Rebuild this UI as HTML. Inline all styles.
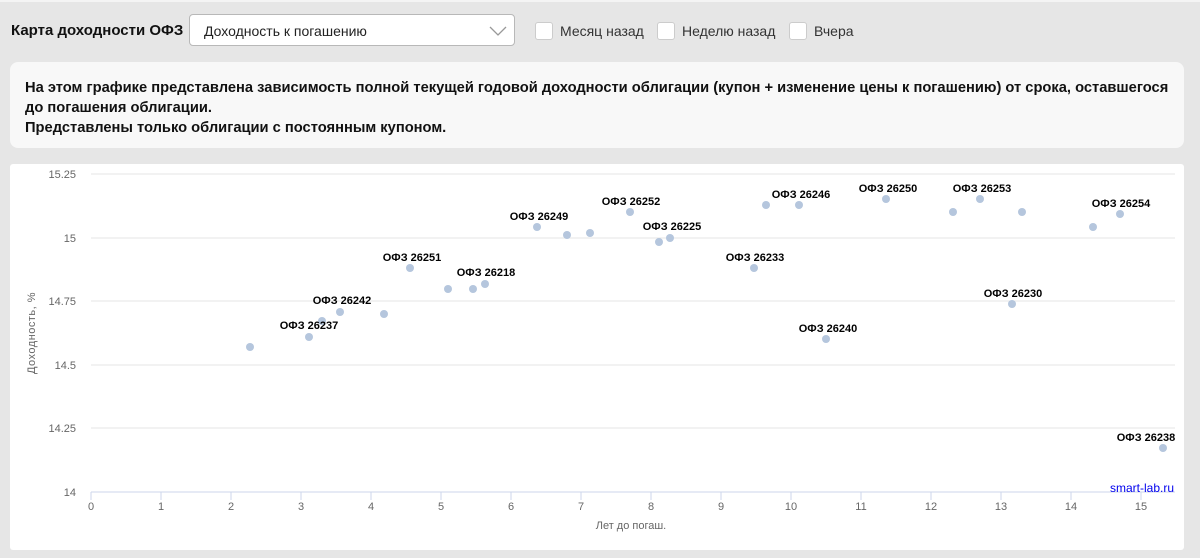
<!DOCTYPE html>
<html><head><meta charset="utf-8"><style>
body{margin:0;width:1200px;height:558px;background:#e6e6e6;font-family:"Liberation Sans",sans-serif;position:relative;overflow:hidden}
.top{position:absolute;top:0;left:0;right:0;height:2px;background:#f4f4f4}
.title{position:absolute;left:11px;top:22px;font-size:15px;font-weight:bold;color:#111}
.sel{position:absolute;left:189px;top:14px;width:326px;height:32px;background:#fff;border:1px solid #b8b8b8;border-radius:4px;box-sizing:border-box}
.sel span{position:absolute;left:14px;top:8px;font-size:14px;color:#222}
.cb{position:absolute;top:22px;width:16px;height:16px;background:#fff;border:1px solid #ccc;border-radius:3px}
.cbl{position:absolute;top:23px;font-size:14px;color:#333}
.info{position:absolute;left:10px;top:62px;width:1174px;height:86px;background:#f8f8f8;border-radius:8px}
.info p{margin:0;position:absolute;left:15px;top:16px;font-size:14.7px;font-weight:bold;color:#111;line-height:20px}
.chart{position:absolute;left:10px;top:164px;width:1174px;height:386px;background:#fff;border-radius:3px}
</style></head><body>
<div class="top"></div>
<div class="title">Карта доходности ОФЗ</div>
<div class="sel"><span>Доходность к погашению</span>
<svg style="position:absolute;right:6px;top:9px" width="20" height="14"><path d="M2 3 L10 11 L18 3" fill="none" stroke="#999" stroke-width="1.3"/></svg></div>
<div class="cb" style="left:535px"></div><div class="cbl" style="left:560px">Месяц назад</div>
<div class="cb" style="left:657px"></div><div class="cbl" style="left:682px">Неделю назад</div>
<div class="cb" style="left:789px"></div><div class="cbl" style="left:814px">Вчера</div>
<div class="info"><p>На этом графике представлена зависимость полной текущей годовой доходности облигации (купон + изменение цены к погашению) от срока, оставшегося<br>до погашения облигации.<br>Представлены только облигации с постоянным купоном.</p></div>
<div class="chart"></div>
<svg style="position:absolute;left:0;top:0" width="1200" height="558" font-family="Liberation Sans, DejaVu Sans, sans-serif">
<g stroke="#e6e6e6" stroke-width="1">
<line x1="91" y1="174" x2="1175" y2="174"/><line x1="91" y1="238" x2="1175" y2="238"/><line x1="91" y1="301" x2="1175" y2="301"/><line x1="91" y1="365" x2="1175" y2="365"/><line x1="91" y1="428" x2="1175" y2="428"/>
</g>
<line x1="91" y1="492" x2="1175" y2="492" stroke="#ccd6eb"/>
<g stroke="#ccd6eb"><line x1="91" y1="492" x2="91" y2="500"/><line x1="161" y1="492" x2="161" y2="500"/><line x1="231" y1="492" x2="231" y2="500"/><line x1="301" y1="492" x2="301" y2="500"/><line x1="371" y1="492" x2="371" y2="500"/><line x1="441" y1="492" x2="441" y2="500"/><line x1="511" y1="492" x2="511" y2="500"/><line x1="581" y1="492" x2="581" y2="500"/><line x1="651" y1="492" x2="651" y2="500"/><line x1="721" y1="492" x2="721" y2="500"/><line x1="791" y1="492" x2="791" y2="500"/><line x1="861" y1="492" x2="861" y2="500"/><line x1="931" y1="492" x2="931" y2="500"/><line x1="1001" y1="492" x2="1001" y2="500"/><line x1="1071" y1="492" x2="1071" y2="500"/><line x1="1141" y1="492" x2="1141" y2="500"/></g>
<g font-size="11" fill="#666" text-anchor="middle">
<text x="91" y="510">0</text><text x="161" y="510">1</text><text x="231" y="510">2</text><text x="301" y="510">3</text><text x="371" y="510">4</text><text x="441" y="510">5</text><text x="511" y="510">6</text><text x="581" y="510">7</text><text x="651" y="510">8</text><text x="721" y="510">9</text><text x="791" y="510">10</text><text x="861" y="510">11</text><text x="931" y="510">12</text><text x="1001" y="510">13</text><text x="1071" y="510">14</text><text x="1141" y="510">15</text>
</g>
<g font-size="11" fill="#666" text-anchor="end">
<text x="76" y="178">15.25</text><text x="76" y="242">15</text><text x="76" y="305">14.75</text><text x="76" y="369">14.5</text><text x="76" y="432">14.25</text><text x="76" y="496">14</text>
</g>
<text x="631" y="529" font-size="11" fill="#666" text-anchor="middle">Лет до погаш.</text>
<text transform="translate(35,333) rotate(-90)" font-size="11" fill="#666" text-anchor="middle" letter-spacing="0.5">Доходность, %</text>
<text x="1174" y="492" font-size="12" fill="#0000ee" text-anchor="end">smart-lab.ru</text>
<g fill="#b5c6dd">
<circle cx="250" cy="347" r="4"/><circle cx="309" cy="337" r="4"/><circle cx="322" cy="321" r="4"/><circle cx="340" cy="312" r="4"/><circle cx="384" cy="314" r="4"/><circle cx="410" cy="268" r="4"/><circle cx="448" cy="289" r="4"/><circle cx="473" cy="289" r="4"/><circle cx="485" cy="284" r="4"/><circle cx="537" cy="227" r="4"/><circle cx="567" cy="235" r="4"/><circle cx="590" cy="233" r="4"/><circle cx="630" cy="212" r="4"/><circle cx="659" cy="242" r="4"/><circle cx="670" cy="238" r="4"/><circle cx="754" cy="268" r="4"/><circle cx="766" cy="205" r="4"/><circle cx="799" cy="205" r="4"/><circle cx="826" cy="339" r="4"/><circle cx="886" cy="199" r="4"/><circle cx="953" cy="212" r="4"/><circle cx="980" cy="199" r="4"/><circle cx="1012" cy="304" r="4"/><circle cx="1022" cy="212" r="4"/><circle cx="1093" cy="227" r="4"/><circle cx="1120" cy="214" r="4"/><circle cx="1163" cy="448" r="4"/>
</g>
<g font-size="11" font-weight="bold" fill="#000" text-anchor="middle">
<text x="309" y="329">ОФЗ 26237</text><text x="342" y="304">ОФЗ 26242</text><text x="412" y="261">ОФЗ 26251</text><text x="486" y="276">ОФЗ 26218</text><text x="539" y="220">ОФЗ 26249</text><text x="631" y="205">ОФЗ 26252</text><text x="672" y="230">ОФЗ 26225</text><text x="755" y="261">ОФЗ 26233</text><text x="801" y="198">ОФЗ 26246</text><text x="828" y="332">ОФЗ 26240</text><text x="888" y="192">ОФЗ 26250</text><text x="982" y="192">ОФЗ 26253</text><text x="1013" y="297">ОФЗ 26230</text><text x="1121" y="207">ОФЗ 26254</text><text x="1146" y="441">ОФЗ 26238</text>
</g>
</svg>
</body></html>
